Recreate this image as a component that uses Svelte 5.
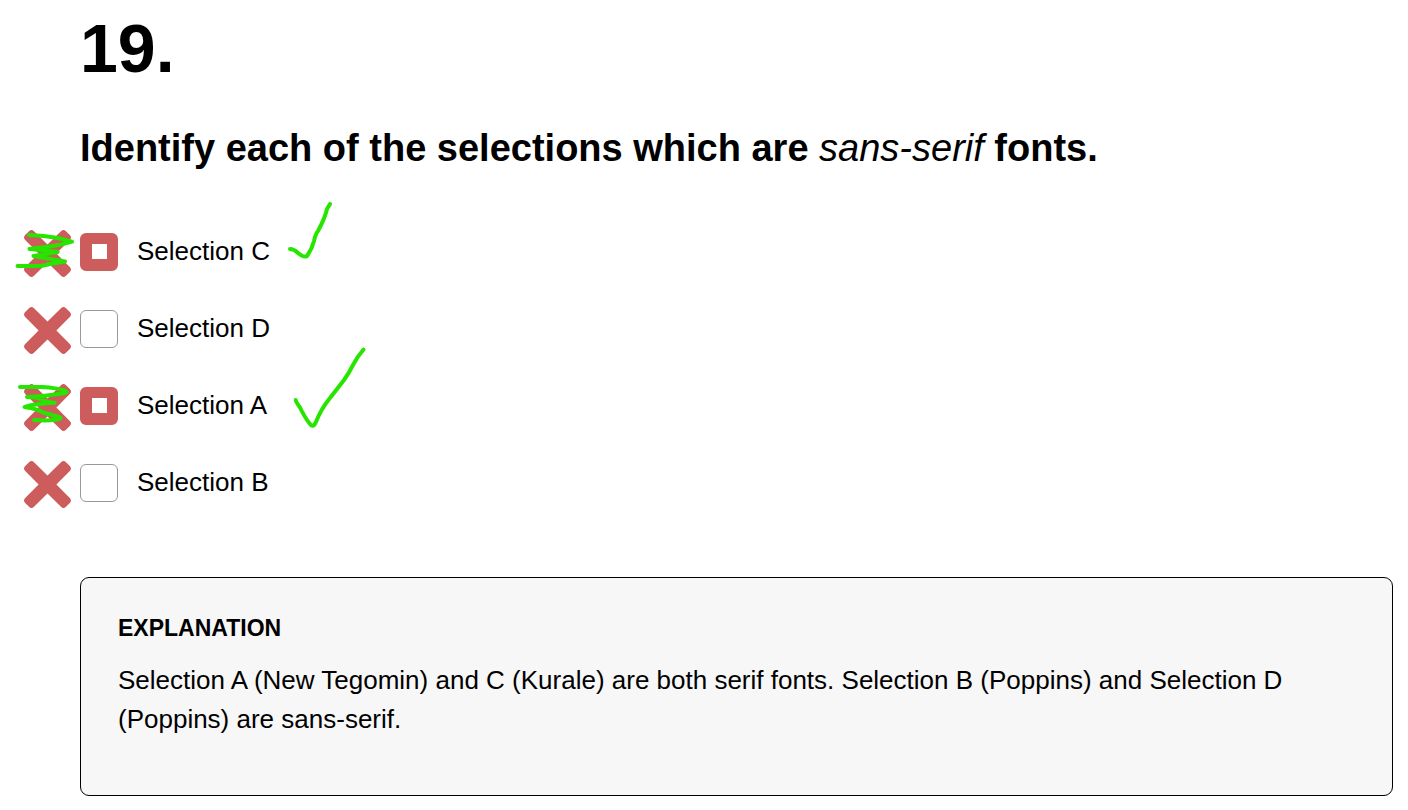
<script>
  let choices = $state([
    { id: 'c', text: 'Selection C', checked: true },
    { id: 'd', text: 'Selection D', checked: false },
    { id: 'a', text: 'Selection A', checked: true },
    { id: 'b', text: 'Selection B', checked: false }
  ]);
</script>

<main>
  <h1>19.</h1>
  <h2>Identify each of the selections which are <em>sans-serif</em> fonts.</h2>

  <div class="answers">
    <ul>
      {#each choices as choice (choice.id)}
        <li>
          <svg class="wrong" viewBox="0 0 47 47" aria-hidden="true">
            <path d="M5 1.200Q7.500 -1.200 10 1.200L23.500 14.600 37 1.200Q39.500 -1.200 42 1.200L45.800 5Q48.200 7.500 45.800 10L32.400 23.500 45.800 37Q48.200 39.500 45.800 42L42 45.800Q39.500 48.200 37 45.800L23.500 32.400 10 45.800Q7.500 48.200 5 45.800L1.200 42Q-1.200 39.500 1.200 37L14.600 23.500 1.200 10Q-1.200 7.500 1.200 5Z" />
          </svg>
          <input type="checkbox" id={choice.id} bind:checked={choice.checked} />
          <label for={choice.id}>{choice.text}</label>
        </li>
      {/each}
    </ul>

    <svg class="ink" viewBox="0 200 400 240" aria-hidden="true">
      <path d="M29 235Q44 235.500 58 238L72 241.700Q63 244.500 53 246L29.500 249Q44 250 57.700 252L33.500 256L65 261.500Q56 263 50 264Q43 266 38 266H17.500" />
      <path d="M20 387H42Q57 388 65 390.500Q70 393 59 394Q42 396.500 27 397Q37 397 41 399.500Q49 402.500 54.700 402.700Q32 404 24.500 407Q38 409 43 412.500L59 417Q63 418.500 56 419.500Q49 421 34 420" />
      <path d="M290 249Q294 249 298 253Q304 258 307 256Q312 249 314 241Q315.500 234 318 231Q325 218 327 209L330 204" />
      <path d="M295.700 400Q296 402 300 407.500Q305 418 310 424Q313 428 315.500 423Q321 409 330 398L344 380Q349 373 353 365Q357 357 363.500 349.500" />
    </svg>
  </div>

  <section>
    <h3>EXPLANATION</h3>
    <p>Selection A (New Tegomin) and C (Kurale) are both serif fonts. Selection B (Poppins) and Selection D (Poppins) are sans-serif.</p>
  </section>
</main>

<style>
  :global(body) {
    margin: 0;
    background: #fff;
  }

  main {
    padding: 8px 15px 14px 80px;
    color: #000;
    font: 26px/39px "Liberation Sans", Arial, sans-serif;
  }

  h1 {
    margin: 0;
    font-size: 68px;
    line-height: 80px;
  }

  h2 {
    margin: 36px 0 61px;
    font-size: 38px;
    line-height: 48px;
  }

  em {
    font-weight: 400;
  }

  .answers {
    position: relative;
    margin-left: -80px;
  }

  ul {
    display: flex;
    flex-direction: column;
    gap: 39px;
    margin: 0;
    padding: 0 0 0 24px;
    list-style: none;
  }

  li {
    display: flex;
    align-items: center;
    height: 38px;
  }

  label {
    padding-bottom: 2px;
  }

  .wrong {
    width: 47px;
    height: 47px;
    padding-top: 3px;
    margin-right: 9px;
    fill: #cd5c5c;
  }

  input {
    appearance: none;
    box-sizing: border-box;
    width: 38px;
    height: 38px;
    margin: 0 19px 0 0;
    border: 1px solid #999;
    border-radius: 6px;
    background: #fff;
  }

  input:checked {
    border: solid #cd5c5c;
    border-width: 11px 11px 12px 12px;
  }

  .ink {
    position: absolute;
    top: -33px;
    left: 0;
    width: 400px;
    height: 240px;
    fill: none;
    stroke: #26e600;
    stroke-width: 4;
    stroke-linecap: round;
    stroke-linejoin: round;
    pointer-events: none;
  }

  section {
    margin-top: 75px;
    padding: 31px 37px 56px;
    border: 1px solid #000;
    border-radius: 9px;
    background: #f7f7f7;
  }

  h3 {
    margin: 0 0 13px;
    font-size: 23px;
    line-height: 39px;
  }

  p {
    margin: 0;
  }
</style>
